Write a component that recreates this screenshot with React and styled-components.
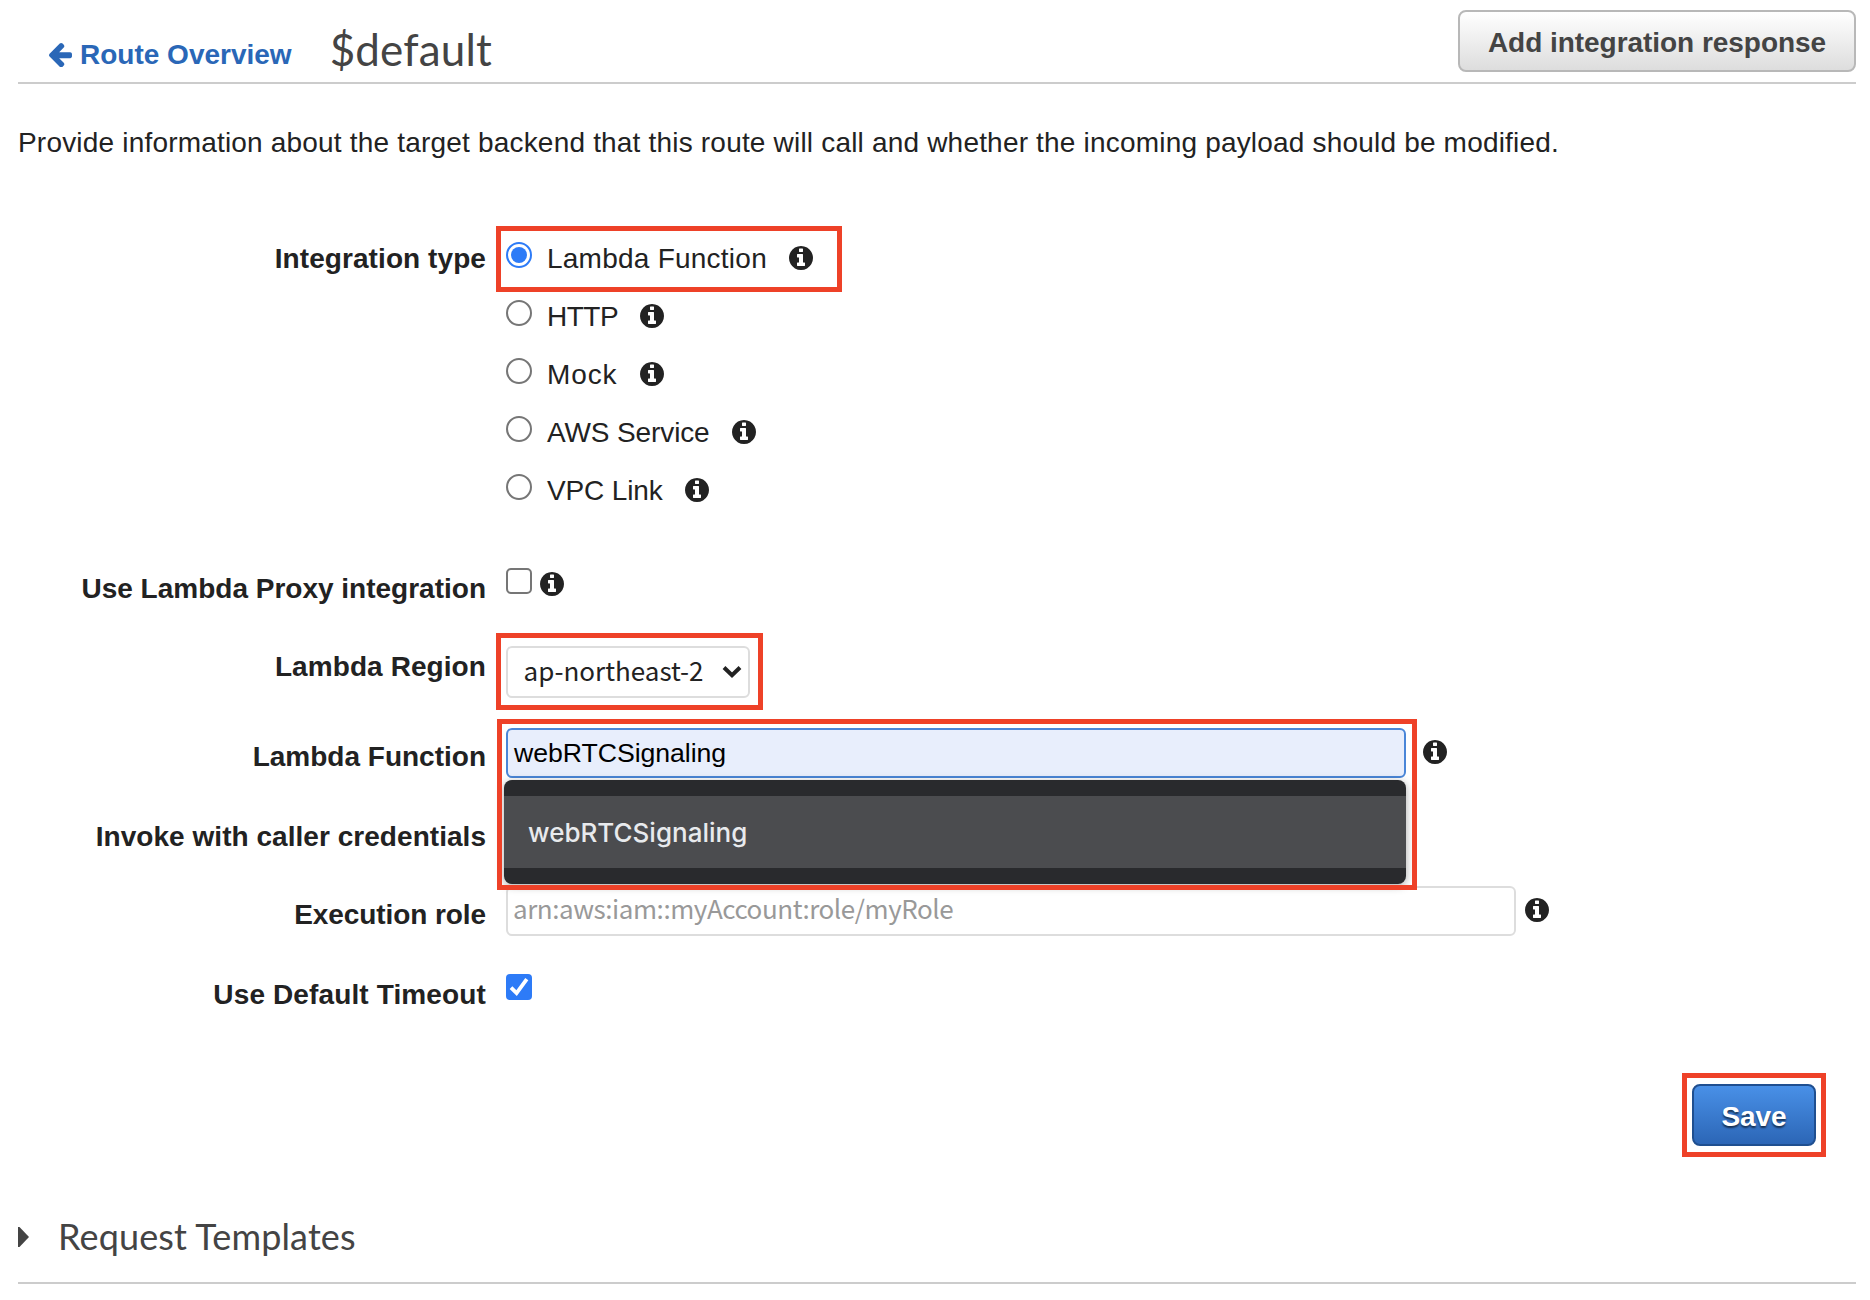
import React from "react";
import styled, { createGlobalStyle, css } from "styled-components";

const GlobalStyle = createGlobalStyle`
  * { box-sizing: border-box; }
  body {
    margin: 0;
    background: #fff;
    color: #222;
    font-family: "Liberation Sans", Arial, sans-serif;
    font-size: 28px;
    line-height: 34px;
  }
`;

const Page = styled.main`
  width: 1870px;
  height: 1300px;
  padding: 0 14px 0 18px;
  overflow: hidden;
  white-space: nowrap;
`;

const Header = styled.header`
  display: flex;
  align-items: flex-start;
  height: 84px;
  border-bottom: 2px solid #ccc;
`;

const BackLink = styled.a`
  display: flex;
  align-items: center;
  gap: 8px;
  margin: 38px 0 0 31px;
  color: #2a67b7;
  font-weight: 700;
`;

const Title = styled.h1`
  margin: 23px auto 0 38px;
  color: #444;
  font: 400 44px/52px Lato, sans-serif;
  letter-spacing: 0.15px;
`;

const Button = styled.button`
  width: ${(p) => p.$width}px;
  height: 62px;
  padding: 3px 0 0;
  border: 2px solid #b8b8b8;
  border-radius: 8px;
  background: linear-gradient(#fff, #ddd);
  color: #444;
  font: 700 28px/32px "Liberation Sans", Arial, sans-serif;
  letter-spacing: -0.04px;
  ${(p) =>
    p.$primary &&
    css`
      border-color: #1f4f90;
      background: linear-gradient(#4990e7, #2c66b6);
      color: #fff;
      text-shadow: 0 2px 2px rgba(0, 0, 0, 0.6);
    `}
`;

const HeaderAction = styled.div`
  margin-top: 10px;
  display: flex;
`;

const Intro = styled.p`
  margin: 42px 0 82px;
  letter-spacing: 0.19px;
`;

const Row = styled.div`
  display: grid;
  grid-template-columns: 468px 1fr;
  column-gap: 20px;
  align-items: start;
  height: ${(p) => p.$height}px;
`;

const Label = styled.div`
  padding-top: ${(p) => p.$drop || 0}px;
  text-align: right;
  font-weight: 700;
  letter-spacing: ${(p) => p.$track || 0}px;
`;

const Control = styled.div`
  position: relative;
  display: flex;
  align-items: flex-start;
`;

const Options = styled.div`
  display: flex;
  flex-direction: column;
  gap: 26px;
`;

const Option = styled.div`
  position: relative;
  display: flex;
  align-items: flex-start;
  height: 32px;
`;

const OptionText = styled.span`
  margin: 0 22px 0 15px;
  letter-spacing: ${(p) => p.$track}px;
`;

const Radio = styled.span`
  display: grid;
  place-items: center;
  width: 26px;
  height: 26px;
  border: 2px solid ${(p) => (p.$on ? "#2d7bf7" : "#767676")};
  border-radius: 50%;
  &::after {
    content: "";
    width: 16px;
    height: 16px;
    border-radius: 50%;
    background: ${(p) => (p.$on ? "#2d7bf7" : "transparent")};
  }
`;

const Check = styled.span`
  display: block;
  width: 26px;
  height: 26px;
  border: ${(p) => (p.$on ? "0" : "2px solid #767676")};
  border-radius: ${(p) => (p.$on ? 4 : 5)}px;
  background: ${(p) => (p.$on ? "#2d7bf7" : "#fff")};
  svg { display: block; }
`;

const IconSlot = styled.span`
  display: block;
  width: 24px;
  height: 24px;
  margin: ${(p) => p.$top || 0}px 0 0 ${(p) => p.$left || 0}px;
  svg { display: block; }
`;

const Field = styled.div`
  width: ${(p) => p.$width}px;
  height: 50px;
  padding: ${(p) => (p.$active ? 8 : 5)}px 6px;
  border: 2px solid ${(p) => (p.$active ? "#4a86d8" : "#ddd")};
  border-radius: 6px;
  background: ${(p) => (p.$active ? "#e8eefc" : "#fff")};
  color: ${(p) => (p.$active ? "#000" : "#999")};
  font-size: 26.67px;
  line-height: 30px;
  letter-spacing: -0.05px;
`;

const Gothic = styled.span`
  display: block;
  margin: ${(p) => p.$margin || 0};
  font-family: "Noto Sans CJK KR", sans-serif;
  font-size: 26px;
  line-height: 30px;
  letter-spacing: ${(p) => p.$track || 0}px;
`;

const Select = styled.div`
  display: flex;
  align-items: center;
  justify-content: space-between;
  width: 244px;
  height: 52px;
  padding: 0 6px 0 16px;
  border: 2px solid #ddd;
  border-radius: 6px;
`;

const Suggestions = styled.div`
  position: absolute;
  top: 52px;
  left: -2px;
  z-index: 1;
  width: 902px;
  padding: 16px 0;
  border-radius: 8px;
  background: #292a2d;
  box-shadow: 0 2px 8px rgba(0, 0, 0, 0.35);
`;

const Suggestion = styled.div`
  height: 72px;
  padding: 1px 0 0 24px;
  background: #4b4c4f;
  color: #e8eaed;
  font: 500 26px/72px Inter, sans-serif;
`;

const Highlight = styled.span`
  position: absolute;
  z-index: 2;
  top: ${(p) => p.$top}px;
  left: ${(p) => p.$left}px;
  width: ${(p) => p.$width}px;
  height: ${(p) => p.$height}px;
  border: 5px solid #ee4128;
  pointer-events: none;
`;

const Actions = styled.div`
  display: flex;
  justify-content: flex-end;
  height: 124px;
  padding-right: 40px;
`;

const ActionItem = styled.div`
  position: relative;
  height: 62px;
`;

const Section = styled.section`
  display: flex;
  align-items: flex-start;
  height: 76px;
  border-bottom: 2px solid #ccc;
  svg { margin-top: 19px; }
`;

const SectionTitle = styled.h2`
  margin: 6px 0 0 29px;
  color: #444;
  font: 400 36px/44px Lato, sans-serif;
  letter-spacing: 0.13px;
`;

function Info({ top = 4, left = 0 }) {
  return (
    <IconSlot $top={top} $left={left}>
      <svg width="24" height="24" viewBox="0 128 1536 1536" fill="#222">
        <path d="M1024 1376v-160q0-14-9-23t-23-9h-96v-512q0-14-9-23t-23-9h-320q-14 0-23 9t-9 23v160q0 14 9 23t23 9h96v320h-96q-14 0-23 9t-9 23v160q0 14 9 23t23 9h448q14 0 23-9t9-23zm-128-896v-160q0-14-9-23t-23-9h-192q-14 0-23 9t-9 23v160q0 14 9 23t23 9h192q14 0 23-9t9-23zm640 416q0 209-103 385.5t-279.5 279.5-385.5 103-385.5-103-279.5-279.5-103-385.5 103-385.5 279.5-279.5 385.5-103 385.5 103 279.5 279.5 103 385.5z" />
      </svg>
    </IconSlot>
  );
}

const TYPES = [
  { name: "Lambda Function", track: 0.24 },
  { name: "HTTP", track: -0.5 },
  { name: "Mock", track: 0.9 },
  { name: "AWS Service", track: -0.12 },
  { name: "VPC Link", track: -0.14 },
];

export default function App() {
  return (
    <>
      <GlobalStyle />
      <Page>
        <Header>
          <BackLink>
            <svg width="23" height="24.3" viewBox="192 181 1472 1558" fill="#2a67b7">
              <path d="M1664 896v128q0 53-32.5 90.5t-84.5 37.5h-704l293 294q38 36 38 90t-38 90l-75 76q-37 37-90 37-52 0-91-37l-651-652q-37-37-37-90 0-52 37-91l651-650q38-38 91-38 52 0 90 38l75 74q38 38 38 91t-38 91l-293 293h704q52 0 84.5 37.5t32.5 90.5z" />
            </svg>
            Route Overview
          </BackLink>
          <Title>$default</Title>
          <HeaderAction>
            <Button $width={398}>Add integration response</Button>
          </HeaderAction>
        </Header>

        <Intro>
          Provide information about the target backend that this route will call and whether the incoming payload should be modified.
        </Intro>

        <Row $height={326}>
          <Label $track={0.08}>Integration type</Label>
          <Options>
            {TYPES.map(({ name, track }, i) => (
              <Option key={name}>
                <Radio $on={i === 0} />
                <OptionText $track={track}>{name}</OptionText>
                <Info />
                {i === 0 && <Highlight $top={-16} $left={-10} $width={346} $height={66} />}
              </Option>
            ))}
          </Options>
        </Row>

        <Row $height={78}>
          <Label $drop={4}>Use Lambda Proxy integration</Label>
          <Control>
            <Check />
            <Info left={7.5} />
          </Control>
        </Row>

        <Row $height={82}>
          <Label $drop={4} $track={0.08}>Lambda Region</Label>
          <Control>
            <Select>
              <Gothic $margin="-4px 0 0 -0.5px">ap-northeast-2</Gothic>
              <svg width="20" height="14" viewBox="0 0 20 14" fill="none" stroke="#222" strokeWidth="4">
                <path d="M2 2.5 10 10.2 18 2.5" />
              </svg>
            </Select>
            <Highlight $top={-13} $left={-10} $width={267} $height={77} />
          </Control>
        </Row>

        <Row $height={84}>
          <Label $drop={12}>Lambda Function</Label>
          <Control>
            <Field $width={900} $active>webRTCSignaling</Field>
            <Info top={12} left={17} />
            <Suggestions>
              <Suggestion>webRTCSignaling</Suggestion>
            </Suggestions>
            <Highlight $top={-9} $left={-9} $width={920} $height={171} />
          </Control>
        </Row>

        <Row $height={74}>
          <Label $drop={8} $track={0.04}>Invoke with caller credentials</Label>
        </Row>

        <Row $height={88}>
          <Label $drop={12} $track={-0.08}>Execution role</Label>
          <Control>
            <Field $width={1010}>
              <Gothic $margin="0 0 0 -1px" $track={-0.45}>arn:aws:iam::myAccount:role/myRole</Gothic>
            </Field>
            <Info top={12} left={8.5} />
          </Control>
        </Row>

        <Row $height={110}>
          <Label $drop={4} $track={0.13}>Use Default Timeout</Label>
          <Control>
            <Check $on>
              <svg width="26" height="26" viewBox="0 0 26 26" fill="none" stroke="#fff" strokeWidth="3.8">
                <path d="M5 13.6 10.6 19.2 20.8 5.2" />
              </svg>
            </Check>
          </Control>
        </Row>

        <Actions>
          <ActionItem>
            <Button $primary $width={124}>Save</Button>
            <Highlight $top={-11} $left={-10} $width={144} $height={84} />
          </ActionItem>
        </Actions>

        <Section>
          <svg width="11" height="20" viewBox="0 0 11 20" fill="#444">
            <path d="M0 0h1.5L11 10 1.5 20H0z" />
          </svg>
          <SectionTitle>Request Templates</SectionTitle>
        </Section>
      </Page>
    </>
  );
}
